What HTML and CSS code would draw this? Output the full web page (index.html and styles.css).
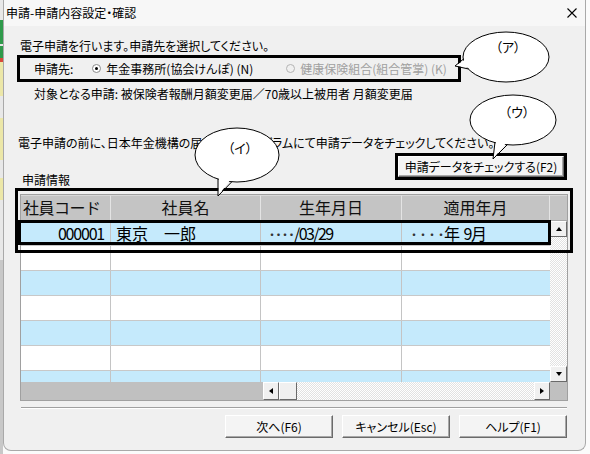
FILE: index.html
```html
<!DOCTYPE html>
<html lang="ja">
  <head>
    <meta charset="UTF-8" />
    <title>申請-申請内容設定・確認</title>
    <link rel="stylesheet" href="styles.css">
  </head>
  <body>
    <div class="desktop">
      <div class="app-edge"></div>

      <div class="window">
        <div class="titlebar">
          <span class="title">申請-申請内容設定・確認</span>
          <svg class="close" width="10" height="10" viewBox="0 0 10 10">
            <path d="M0.5 0.5 L9.5 9.5 M9.5 0.5 L0.5 9.5" stroke="#000" stroke-width="1.1" fill="none" />
          </svg>
        </div>

        <div class="main">
          <p class="intro">電子申請を行います。申請先を選択してください。</p>

          <div class="dest-box">
            <span class="dest-label">申請先:</span>
            <label class="radio"><span class="dot checked"></span>年金事務所(協会けんぽ) (N)</label>
            <label class="radio disabled"><span class="dot"></span>健康保険組合(組合管掌) (K)</label>
          </div>

          <p class="target">対象となる申請: 被保険者報酬月額変更届／70歳以上被用者 月額変更届</p>
          <p class="precheck">電子申請の前に、日本年金機構の届書作成プログラムにて申請データをチェックしてください。</p>

          <div class="check-row">
            <span class="grid-label">申請情報</span>
            <div class="check-box">
              <button class="check-btn">申請データをチェックする(F2)</button>
            </div>
          </div>

          <div class="grid">
            <div class="grid-head">
              <div class="hcell c1 left">社員コード</div>
              <div class="hcell c2">社員名</div>
              <div class="hcell c3">生年月日</div>
              <div class="hcell c4">適用年月</div>
              <div class="hcell filler"></div>
            </div>
            <div class="grid-body">
              <div class="rows">
                <div class="row blue">
                  <div class="cell c1 num">000001</div>
                  <div class="cell c2">東京　一郎</div>
                  <div class="cell c3"><span class="dots narrow">・・・・</span><span class="digits">/03/29</span></div>
                  <div class="cell c4"><span class="dots">・・・・</span>年 <span class="digits">9</span>月</div>
                </div>
                <div class="row"><div class="cell c1"></div><div class="cell c2"></div><div class="cell c3"></div><div class="cell c4"></div></div>
                <div class="row blue"><div class="cell c1"></div><div class="cell c2"></div><div class="cell c3"></div><div class="cell c4"></div></div>
                <div class="row"><div class="cell c1"></div><div class="cell c2"></div><div class="cell c3"></div><div class="cell c4"></div></div>
                <div class="row blue"><div class="cell c1"></div><div class="cell c2"></div><div class="cell c3"></div><div class="cell c4"></div></div>
                <div class="row"><div class="cell c1"></div><div class="cell c2"></div><div class="cell c3"></div><div class="cell c4"></div></div>
                <div class="row blue"><div class="cell c1"></div><div class="cell c2"></div><div class="cell c3"></div><div class="cell c4"></div></div>
              </div>
              <div class="vscroll">
                <div class="arrow"><span class="tri up"></span></div>
                <div class="arrow"><span class="tri down"></span></div>
              </div>
            </div>
            <div class="hscroll">
              <div class="frozen"></div>
              <div class="arrow h"><span class="tri left"></span></div>
              <div class="thumb"></div>
              <div class="track"></div>
              <div class="arrow h"><span class="tri right"></span></div>
              <div class="corner"></div>
            </div>
          </div>

          <div class="sep"></div>

          <div class="buttons">
            <button class="btn">次へ(F6)</button>
            <button class="btn">キャンセル(Esc)</button>
            <button class="btn">ヘルプ(F1)</button>
          </div>
        </div>
      </div>

      <!-- annotation frames drawn over the dialog -->
      <div class="mark mark-table"></div>
      <div class="mark mark-row"></div>

      <svg class="callouts" width="590" height="454" viewBox="0 0 590 454">
        <g class="callout">
          <ellipse cx="506" cy="57" rx="43" ry="25" />
          <polygon class="tail-fill" points="466,59 470,68 455,66" />
          <path d="M463.5 59 L455 66 L468.5 69" />
          <text x="508" y="52">（ア）</text>
        </g>
        <g class="callout">
          <ellipse cx="513" cy="120" rx="43" ry="25" />
          <polygon class="tail-fill" points="496,141 507,142 493,159" />
          <path d="M495 142 L493 159 L507.5 144.5" />
          <text x="517" y="117">（ウ）</text>
        </g>
        <g class="callout">
          <ellipse cx="237" cy="155" rx="42" ry="27" />
          <polygon class="tail-fill" points="219,177 231,179 218,196" />
          <path d="M218 179 L218 196 L232 181.6" />
          <text x="240" y="153">（イ）</text>
        </g>
      </svg>
    </div>
  </body>
</html>
```

FILE: styles.css
```css
* {
  margin: 0;
  padding: 0;
  box-sizing: border-box;
}
body {
  font-family: "Noto Sans CJK JP", "Noto Sans", sans-serif;
  font-size: 12px;
  color: #000;
  background: #fff;
  font-feature-settings: "palt";
}
.desktop {
  position: relative;
  width: 590px;
  height: 454px;
  display: flex;
  overflow: hidden;
  background: #fbfbfb;
}
.app-edge {
  width: 3px;
  height: 454px;
  background: linear-gradient(
    #e8e8e8 0 20px, #2f9a4b 20px 44px, #e8e8e8 44px 46px, #2f9a4b 46px 58px,
    #d84a3a 58px 62px, #ece7a8 62px 96px, #e8e8e8 96px 118px, #ece7a8 118px 160px,
    #e8e8e8 160px 178px, #ece7a8 178px 200px, #e8e8e8 200px 260px, #c8c8c8 260px
  );
}
.window {
  width: 583px;
  height: 451px;
  background: #f0f0f0;
  border: 1px solid #a9a9a9;
  border-top: none;
  border-radius: 0 0 8px 8px;
  display: flex;
  flex-direction: column;
}
.titlebar {
  height: 26px;
  background: #f7f7f7;
  display: flex;
  align-items: center;
  justify-content: space-between;
  padding: 0 8px 0 2px;
}
.title {
  font-size: 12px;
  line-height: 14px;
}
.main {
  padding: 0 17px 0 16px;
}
.intro {
  margin-top: 13px;
  line-height: 14px;
}
.dest-box {
  margin: 2px 0 0 -3px;
  width: 444px;
  height: 27px;
  border: 3px solid #000;
  display: flex;
  align-items: center;
  padding-left: 14px;
  line-height: 14px;
}
.dest-label {
  margin-right: 19px;
}
.radio {
  display: flex;
  align-items: center;
  gap: 5px;
  margin-right: 33px;
}
.radio.disabled {
  color: #a0a0a0;
  margin-right: 0;
}
.dot {
  width: 9px;
  height: 9px;
  border: 1px solid #8a8a8a;
  border-radius: 50%;
  background: #fff;
  display: flex;
  align-items: center;
  justify-content: center;
}
.dot.checked::after {
  content: "";
  width: 3px;
  height: 3px;
  border-radius: 50%;
  background: #000;
}
.disabled .dot {
  border-color: #b4b4b4;
  background: #f0f0f0;
}
.target {
  margin-top: 5px;
  padding-left: 14px;
  line-height: 14px;
}
.precheck {
  margin: 35px 0 0 -2px;
  line-height: 14px;
}
.check-row {
  height: 38px;
  display: flex;
  justify-content: space-between;
}
.grid-label {
  align-self: flex-end;
  line-height: 14px;
  margin: 0 0 1px 2px;
}
.check-box {
  margin: 3px 1px 0 0;
  width: 172px;
  height: 27px;
  border: 3px solid #000;
}
.check-btn,
.btn {
  font-family: inherit;
  font-size: 12px;
  font-feature-settings: "palt";
  color: #000;
  background: #f4f4f4;
  border: 1px solid;
  border-color: #fff #6a6a6a #6a6a6a #fff;
  box-shadow: inset -1px -1px #a8a8a8;
}
.check-btn {
  width: 100%;
  height: 100%;
}

/* grid */
.grid {
  margin-top: 6px;
  width: 548px;
  height: 207px;
  border: 1px solid #a0a0a0;
  background: #fff;
}
.grid-head {
  display: flex;
  height: 26px;
  border-bottom: 1px solid #a8a8a8;
}
.hcell {
  background: #c4c4c4;
  border-right: 1px solid #e4e4e4;
  border-top: 1px solid #d8d8d8;
  font-size: 16px;
  line-height: 23px;
  text-align: center;
  font-feature-settings: normal;
  color: #111;
}
.hcell.left {
  text-align: left;
  padding-left: 2px;
  letter-spacing: -0.5px;
}
.hcell.filler {
  width: 17px;
  border-right: none;
}
.c1 { width: 90px; }
.c2 { width: 150px; }
.c3 { width: 141px; }
.c4 { width: 148px; }
.grid-body {
  display: flex;
  height: 161px;
}
.rows {
  width: 529px;
  overflow: hidden;
}
.row {
  display: flex;
  height: 25px;
  border-bottom: 1px solid #c8c8c8;
  background: #fff;
}
.row.blue {
  background: #c5eafc;
}
.cell {
  border-right: 1px solid #c4c4c4;
  font-size: 16px;
  line-height: 24px;
  padding-left: 5px;
  white-space: nowrap;
  font-feature-settings: normal;
}
.cell.c4 {
  border-right: none;
  padding-left: 6px;
}
.cell.num {
  text-align: right;
  padding: 0 6px 0 0;
  letter-spacing: -1.2px;
}
.digits {
  letter-spacing: -1.6px;
}
.dots {
  font-size: 12px;
  letter-spacing: -3px;
  color: #333;
}
.dots.narrow {
  letter-spacing: -5.5px;
  margin-right: 2px;
}
.vscroll {
  width: 17px;
  display: flex;
  flex-direction: column;
  justify-content: space-between;
  background: repeating-conic-gradient(#fff 0 25%, #e2e2e2 0 50%) 0 0 / 2px 2px;
}
.arrow {
  width: 17px;
  height: 16px;
  background: #f0f0f0;
  border: 1px solid;
  border-color: #fff #6a6a6a #6a6a6a #fff;
  display: flex;
  align-items: center;
  justify-content: center;
}
.arrow.h {
  width: 16px;
  height: 18px;
}
.tri {
  width: 0;
  height: 0;
  border: 3px solid transparent;
}
.tri.up { border-bottom: 4px solid #000; border-top: none; }
.tri.down { border-top: 4px solid #000; border-bottom: none; }
.tri.left { border-right: 4px solid #000; border-left: none; }
.tri.right { border-left: 4px solid #000; border-right: none; }
.hscroll {
  display: flex;
  height: 18px;
}
.frozen {
  width: 242px;
  background: #c0c0c0;
}
.thumb {
  width: 18px;
  background: #f0f0f0;
  border: 1px solid;
  border-color: #fff #6a6a6a #6a6a6a #fff;
}
.track {
  flex: 1;
  background: repeating-conic-gradient(#fff 0 25%, #e2e2e2 0 50%) 0 0 / 2px 2px;
}
.corner {
  width: 17px;
  background: #c0c0c0;
}
.sep {
  margin: 6px 0 0 1px;
  width: 546px;
  height: 2px;
  border-top: 1px solid #a0a0a0;
  border-bottom: 1px solid #fff;
}
.buttons {
  margin-top: 6px;
  display: flex;
  justify-content: flex-end;
  gap: 9px;
  padding-right: 1px;
}
.btn {
  width: 108px;
  height: 23px;
}

/* annotations */
.mark {
  position: absolute;
  border: 3px solid #000;
}
.mark-table {
  left: 15px;
  top: 188px;
  width: 558px;
  height: 65px;
}
.mark-row {
  left: 18px;
  top: 220px;
  width: 533px;
  height: 25px;
}
.callouts {
  position: absolute;
  left: 0;
  top: 0;
  pointer-events: none;
}
.callout ellipse {
  fill: #fff;
  stroke: #000;
  stroke-width: 1;
}
.callout .tail-fill {
  fill: #fff;
}
.callout path {
  fill: none;
  stroke: #000;
  stroke-width: 1;
}
.callout text {
  font-family: "Noto Sans CJK JP", sans-serif;
  font-size: 13px;
  text-anchor: middle;
}
```
